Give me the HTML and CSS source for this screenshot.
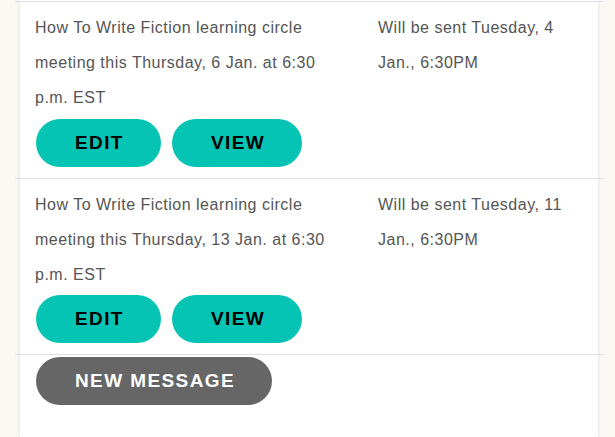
FILE: index.html
```html
<!DOCTYPE html>
<html lang="en">
<head>
<meta charset="utf-8">
<title>Messages</title>
<link rel="stylesheet" href="styles.css">
</head>
<body>
<main class="card">
  <div class="list">
    <div class="row">
      <div class="subject">
        <p class="text">How To Write Fiction learning circle meeting this Thursday, 6 Jan. at 6:30 p.m. EST</p>
        <div class="actions">
          <a class="btn btn-teal">EDIT</a>
          <a class="btn btn-teal">VIEW</a>
        </div>
      </div>
      <div class="when"><p class="text">Will be sent Tuesday, 4 Jan., 6:30PM</p></div>
    </div>
    <div class="row">
      <div class="subject">
        <p class="text">How To Write Fiction learning circle meeting this Thursday, 13 Jan. at 6:30 p.m. EST</p>
        <div class="actions">
          <a class="btn btn-teal">EDIT</a>
          <a class="btn btn-teal">VIEW</a>
        </div>
      </div>
      <div class="when"><p class="text">Will be sent Tuesday, 11 Jan., 6:30PM</p></div>
    </div>
    <div class="footer">
      <a class="btn btn-gray">NEW MESSAGE</a>
    </div>
  </div>
</main>
</body>
</html>
```

FILE: styles.css
```css
html, body {
  margin: 0;
  padding: 0;
}
body {
  background: #faf8f2;
  font-family: "Liberation Sans", Arial, sans-serif;
  height: 437px;
  overflow: hidden;
}
.card {
  margin-left: 20px;
  width: 578px;
  min-height: 437px;
  background: #fff;
  box-shadow: 0 0 3px rgba(0, 0, 0, 0.12);
  padding-top: 1px;
  box-sizing: border-box;
}
.list {
  margin: 0 -5px;
}
.row {
  display: grid;
  grid-template-columns: 335px 1fr;
  border-top: 1px solid #e0dfe6;
  padding: 8px 0 11px;
}
.subject {
  padding-left: 20px;
}
.when {
  padding-left: 28px;
  padding-right: 15px;
}
.text {
  margin: 0;
  font-size: 16px;
  letter-spacing: 0.5px;
  line-height: 35px;
  color: #555;
}
.actions {
  display: flex;
  gap: 11px;
  margin: 4px 0 0 1px;
}
.row + .row .actions {
  margin-top: 3px;
}
.btn {
  display: inline-flex;
  align-items: center;
  justify-content: center;
  height: 48px;
  padding: 0 37px 0 39px;
  border-radius: 24px;
  font-size: 19px;
  font-weight: bold;
  letter-spacing: 1.4px;
  text-decoration: none;
  box-sizing: border-box;
}
.btn-teal {
  background: #06c4b4;
  color: #000;
}
.btn-gray {
  background: #666;
  color: #fff;
}
.footer {
  border-top: 1px solid #e0dfe6;
  padding: 2px 0 0 21px;
}
```
